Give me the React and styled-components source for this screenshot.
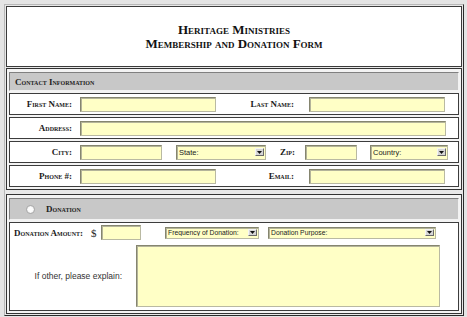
import styled, { createGlobalStyle } from "styled-components";

const GlobalStyle = createGlobalStyle`
  html, body {
    margin: 0;
    padding: 0;
    background: #e4e4e4;
  }
  body {
    font-family: "Liberation Serif", "Times New Roman", serif;
    color: #1a1a1a;
  }
`;

const Page = styled.div`
  padding: 4px 0 0 4px;
`;

const Frame = styled.div`
  width: 460px;
  box-sizing: border-box;
  border: 1px solid;
  border-color: #b8b8b8 #2a2a2a #2a2a2a #b8b8b8;
  padding: 1px;
  background: #e8e8e8;
  display: flex;
  flex-direction: column;
  gap: 1px;
`;

const Header = styled.div`
  height: 61px;
  box-sizing: border-box;
  border: 1px solid #3a3a3a;
  background: #fff;
  display: flex;
  flex-direction: column;
  align-items: center;
  justify-content: center;
  padding-top: 1px;
`;

const Title = styled.div`
  font-size: 13px;
  line-height: 14px;
  font-weight: bold;
  font-variant: small-caps;
  color: #111;
`;

const Section = styled.div`
  border: 1px solid #333;
  background: #f3f3f3;
  padding: 3px 2px 2px 2px;
  margin-top: ${(p) => p.$top || 0}px;
  display: flex;
  flex-direction: column;
  gap: 2px;
`;

const SectionHeader = styled.div`
  height: ${(p) => p.$h}px;
  box-sizing: border-box;
  border: 1px solid;
  border-color: #808080 #f2f2f2 #f2f2f2 #808080;
  background: #c8c8c8;
  display: flex;
  align-items: center;
  padding-left: ${(p) => p.$pl}px;
  font-size: 9px;
  font-weight: bold;
  font-variant: small-caps;
  color: #222;
`;

const Radio = styled.input.attrs({ type: "radio" })`
  appearance: none;
  margin: 0 11px 0 0;
  width: 9px;
  height: 9px;
  border-radius: 50%;
  border: 1px solid #a8a8a8;
  background: radial-gradient(circle at 50% 50%, #fdfdfd 40%, #e2e2e2 100%);
`;

const Row = styled.div`
  height: 22px;
  box-sizing: border-box;
  border: 1px solid #3c3c3c;
  background: #fff;
  display: flex;
  align-items: center;
`;

const Label = styled.label`
  width: ${(p) => (p.$w ? `${p.$w}px` : "auto")};
  flex-shrink: 0;
  text-align: ${(p) => p.$align || "right"};
  font-size: 9px;
  font-weight: bold;
  font-variant: small-caps;
  color: #1a1a1a;
  white-space: nowrap;
`;

const Field = styled.input`
  width: ${(p) => p.$w}px;
  height: 15px;
  margin: 0 0 0 ${(p) => p.$ml || 0}px;
  padding: 0 3px;
  box-sizing: border-box;
  flex-shrink: 0;
  border: 1px solid;
  border-color: #85856f #b9b9a2 #b9b9a2 #85856f;
  box-shadow: inset 1px 1px 0 #b4b49a;
  background: #ffffc6;
  outline: none;
`;

const SelectBox = styled.div`
  width: ${(p) => p.$w}px;
  height: ${(p) => p.$h || 15}px;
  margin-left: ${(p) => p.$ml || 0}px;
  box-sizing: border-box;
  flex-shrink: 0;
  display: flex;
  align-items: center;
  border: 1px solid;
  border-color: #85856f #b9b9a2 #b9b9a2 #85856f;
  box-shadow: inset 1px 1px 0 #b4b49a;
  background: #ffffc6;
`;

const SelectInput = styled.select`
  appearance: none;
  flex: 1;
  min-width: 0;
  height: 100%;
  border: none;
  background: transparent;
  padding: 0 0 0 2px;
  margin: 0;
  font-family: "Liberation Sans", Arial, sans-serif;
  font-size: ${(p) => p.$fs}px;
  color: #222;
  outline: none;
`;

const Arrow = styled.span`
  width: 9px;
  height: ${(p) => p.$h}px;
  margin-right: 1px;
  box-sizing: border-box;
  flex-shrink: 0;
  display: flex;
  align-items: center;
  justify-content: center;
  background: #d6d6d6;
  border: 1px solid;
  border-color: #f4f4f4 #6a6a6a #6a6a6a #f4f4f4;
`;

const Select = ({ w, h, ml, fs, text }) => (
  <SelectBox $w={w} $h={h} $ml={ml}>
    <SelectInput $fs={fs} defaultValue="">
      <option value="">{text}</option>
    </SelectInput>
    <Arrow $h={h && h < 14 ? 7 : 8}>
      <svg width="5" height="3" viewBox="0 0 5 3">
        <path d="M0 0h5L2.5 3z" fill="#111" />
      </svg>
    </Arrow>
  </SelectBox>
);

const DonationCell = styled.div`
  height: 89px;
  box-sizing: border-box;
  border: 1px solid #3c3c3c;
  background: #fff;
  padding: 2px 0 0 4px;
  display: flex;
  flex-direction: column;
  gap: 5px;
`;

const Line = styled.div`
  display: flex;
  align-items: center;
`;

const Dollar = styled.span`
  width: 15px;
  padding-left: 5px;
  box-sizing: border-box;
  font-size: 11px;
  color: #222;
`;

const Explain = styled.label`
  width: 108px;
  flex-shrink: 0;
  text-align: right;
  font-family: "Liberation Sans", Arial, sans-serif;
  font-size: 8.5px;
  color: #333;
`;

const Notes = styled.textarea`
  width: 304px;
  height: 62px;
  margin: 0 0 0 14px;
  box-sizing: border-box;
  resize: none;
  border: 1px solid;
  border-color: #85856f #b9b9a2 #b9b9a2 #85856f;
  box-shadow: inset 1px 1px 0 #b4b49a;
  background: #ffffc6;
  outline: none;
`;

export default function App() {
  return (
    <>
      <GlobalStyle />
      <Page>
        <Frame>
          <Header>
            <Title>Heritage Ministries</Title>
            <Title>Membership and Donation Form</Title>
          </Header>

          <Section>
            <SectionHeader $h={19} $pl={5}>
              Contact Information
            </SectionHeader>
            <Row>
              <Label $w={62}>First Name:</Label>
              <Field $w={136} $ml={8} />
              <Label $w={78}>Last Name:</Label>
              <Field $w={136} $ml={15} />
            </Row>
            <Row>
              <Label $w={62}>Address:</Label>
              <Field $w={366} $ml={8} />
            </Row>
            <Row>
              <Label $w={62}>City:</Label>
              <Field $w={82} $ml={8} />
              <Select w={90} ml={14} fs={7.5} text="State:" />
              <Label $w={29}>Zip:</Label>
              <Field $w={52} $ml={10} />
              <Select w={78} ml={13} fs={7.5} text="Country:" />
            </Row>
            <Row>
              <Label $w={62}>Phone #:</Label>
              <Field $w={136} $ml={8} />
              <Label $w={78}>Email:</Label>
              <Field $w={136} $ml={15} />
            </Row>
          </Section>

          <Section $top={3}>
            <SectionHeader $h={22} $pl={16}>
              <Radio name="donation" />
              Donation
            </SectionHeader>
            <DonationCell>
              <Line>
                <Label $w={72} $align="left">Donation Amount:</Label>
                <Dollar>$</Dollar>
                <Field $w={40} />
                <Select w={94} h={12} ml={24} fs={6.8} text="Frequency of Donation:" />
                <Select w={168} h={12} ml={9} fs={6.8} text="Donation Purpose:" />
              </Line>
              <Line>
                <Explain>If other, please explain:</Explain>
                <Notes />
              </Line>
            </DonationCell>
          </Section>
        </Frame>
      </Page>
    </>
  );
}
